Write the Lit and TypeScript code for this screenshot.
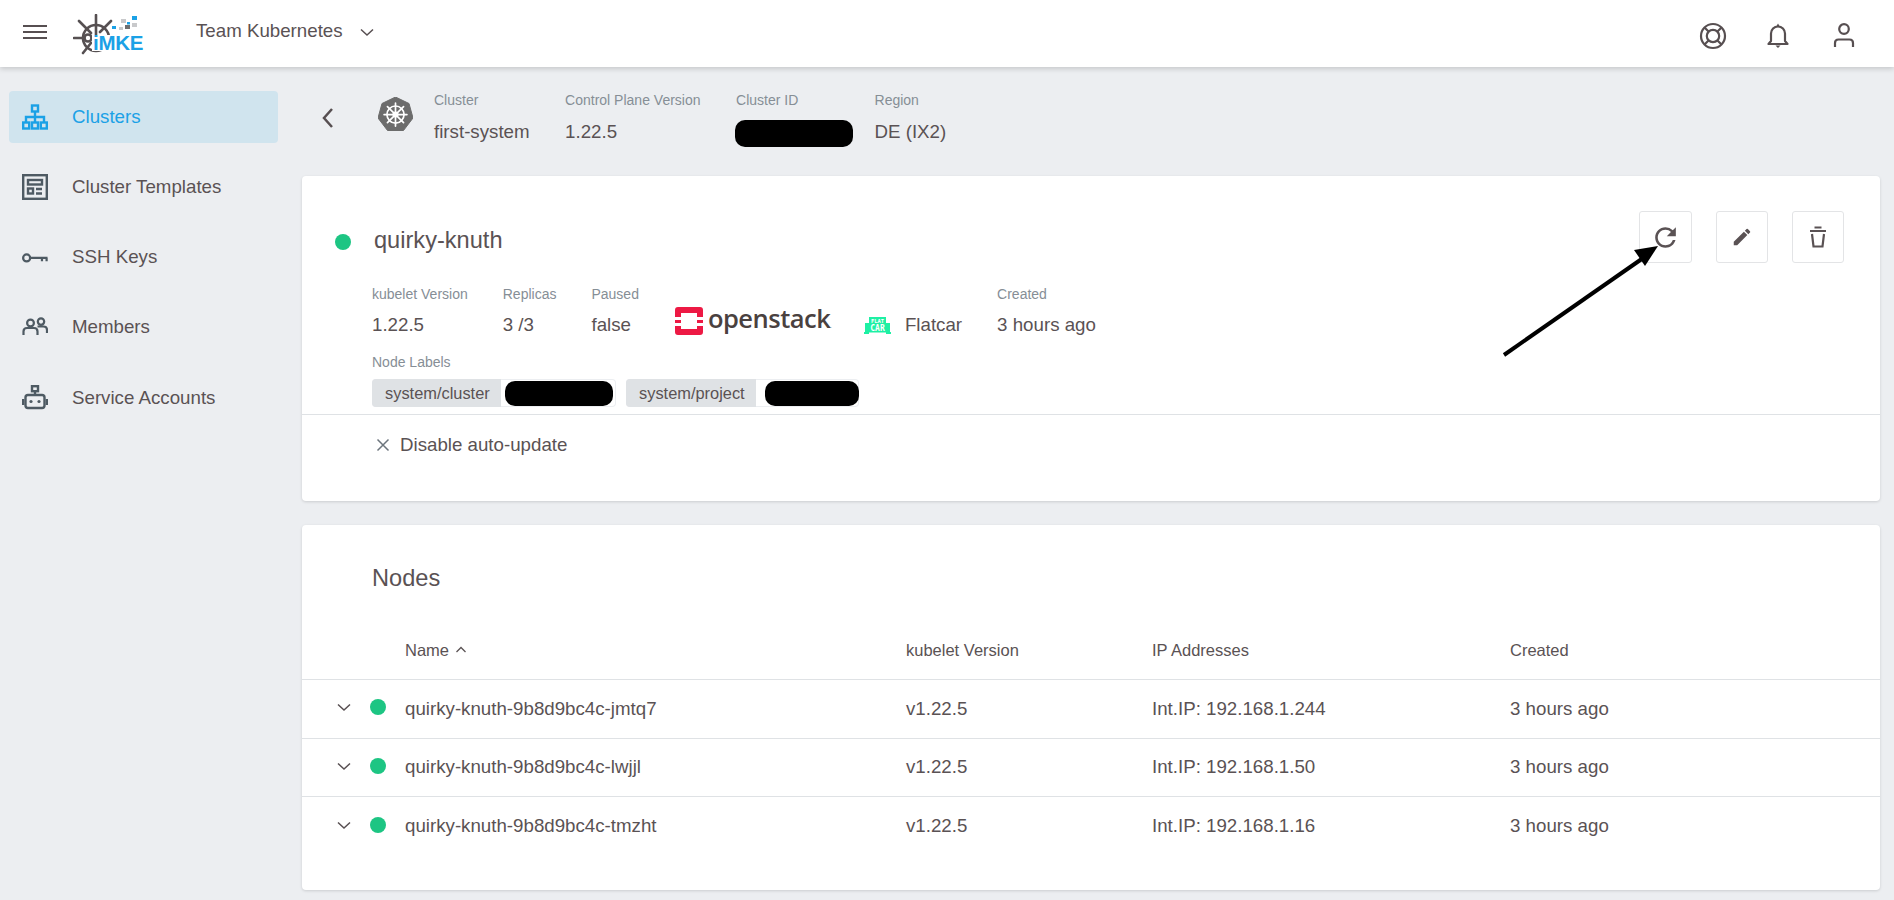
import { LitElement, html, css, svg } from "lit";
import { customElement } from "lit/decorators.js";

const ico = (w: number, h: number, vb: string, body: unknown, cls = "") =>
  html`<svg class=${cls} width=${w} height=${h} viewBox=${vb} aria-hidden="true">${body}</svg>`;

const chevronDown = (w = 16) => ico(w, w, "0 0 16 16", svg`<path d="M2 5.500 8 11l6-5.500" fill="none" stroke="currentColor" stroke-width="1.500"/>`);

const wheel = (stroke: string, sw: number) => svg`
  <g fill="none" stroke=${stroke} stroke-width=${sw} stroke-linecap="round">
    <circle cx="12" cy="12" r="6.600"/>
    <circle cx="12" cy="12" r="1.700"/>
    <path d="M12 3.200v17.600M3.200 12h17.600M5.800 5.800l12.400 12.400M18.200 5.800 5.800 18.200"/>
  </g>`;

const navIcons: Record<string, unknown> = {
  clusters: svg`<g fill="none" stroke="currentColor" stroke-width="2.400"><rect x="10" y="1.500" width="6" height="6"/><rect x="1.200" y="18.500" width="6" height="6"/><rect x="10" y="18.500" width="6" height="6"/><rect x="18.800" y="18.500" width="6" height="6"/><path d="M13 7.500v11M4 18.500V13h18v5.500"/></g>`,
  templates: svg`<g fill="none" stroke="currentColor" stroke-width="2.400"><rect x="1.200" y="1.200" width="23.600" height="23.600"/><rect x="6" y="6" width="14" height="4.500"/><rect x="6" y="14.500" width="5" height="5"/><path d="M14 15h6M14 19.500h6"/></g>`,
  keys: svg`<g fill="none" stroke="currentColor" stroke-width="2.400"><circle cx="5" cy="14" r="3.800"/><path d="M8.600 14H27.500M21.500 14v3.500M26.500 14v3.500"/></g>`,
  members: svg`<g fill="none" stroke="currentColor" stroke-width="2.200"><circle cx="8.500" cy="9" r="3.400"/><circle cx="19" cy="7.600" r="3.200"/><path d="M1.500 21v-3.500c0-2 1.500-3.500 3.500-3.500h7c2 0 3.500 1.500 3.500 3.500V21M15.500 12.500h6c2 0 3.500 1.500 3.500 3.500v3"/></g>`,
  accounts: svg`<g fill="none" stroke="currentColor" stroke-width="2.400"><rect x="10" y="1.200" width="6" height="5"/><path d="M13 6v4"/><rect x="3.500" y="10" width="19" height="13" rx="2.500"/><path d="M1.200 14v6M24.800 14v6"/></g><circle cx="9" cy="16.500" r="1.600" fill="currentColor"/><circle cx="17" cy="16.500" r="1.600" fill="currentColor"/>`,
};

@customElement("app-root")
export class AppRoot extends LitElement {
  static styles = css`
    :host { display: block; height: 900px; overflow: hidden; position: relative; background: #eceef1; font-family: "Liberation Sans", Arial, sans-serif; color: #5a5254; }
    svg { display: block; flex: none; }
    .top { height: 67px; background: #fff; box-shadow: 0 2px 5px rgba(0,0,0,.16); display: flex; align-items: center; position: relative; z-index: 1; }
    .burger { width: 24px; margin: 0 0 4px 23px; display: grid; gap: 4px; }
    .burger i { height: 2px; background: #574f51; display: block; }
    .logo { margin: 3px 0 0 26px; position: relative; width: 70px; height: 42px; }
    .logo-text { position: absolute; left: 20px; top: 20.5px; font-size: 20.5px; line-height: 16px; font-weight: 700; color: #1ba1e6; letter-spacing: -.3px; background: #fff; padding: 0 0 0 1px; margin-left: -1px; }
    .team { margin: 0 0 5px 53px; font-size: 18.72px; }
    .team-chev { margin: 0 0 3px 16px; color: #574f51; }
    .top-actions { margin-left: auto; display: flex; align-items: center; gap: 38px; padding: 5px 38px 0 0; color: #574f51; }
    .bell { margin-right: 3px; }
    .shell { display: grid; grid-template-columns: 302px 1fr; }
    .side { padding: 24px 24px 0 9px; display: grid; gap: 18.15px; align-content: start; }
    .nav { height: 52px; border-radius: 4px; display: flex; align-items: center; font-size: 18.72px; color: #5a5254; padding: 0 0 0 13px; gap: 24px; }
    .nav svg { color: #4e5a63; }
    .nav.active { background: #d0e4ee; color: #1ba1e6; }
    .nav.active svg { color: #1ba1e6; }
    .main { padding: 0 14px 0 0; }
    .crumb { height: 109px; display: flex; align-items: flex-start; padding-top: 25px; box-sizing: border-box; }
    .back { margin: 14px 42px 0 18px; color: #574f51; }
    .k8s { margin: 5px 21px 0 0; }
    .metas { display: flex; gap: 35px; }
    .crumb .metas { gap: 35.5px; }
    .meta .l { font-size: 14px; line-height: 16px; color: #868e96; white-space: nowrap; }
    .meta .v { font-size: 18.72px; line-height: 22px; margin-top: 13px; white-space: nowrap; }
    .meta.narrow { width: 103px; }
    .pill { background: #000; border-radius: 10px; display: block; }
    .pill.id { width: 118px; height: 27px; margin: 12px 0 0 -1px; }
    .card { background: #fff; border-radius: 4px; box-shadow: 0 1px 3px rgba(0,0,0,.14); }
    .c1 { height: 325px; }
    .c1-head { display: flex; align-items: flex-start; padding: 35px 36px 0 33px; }
    .dot { width: 16px; height: 16px; border-radius: 50%; background: #1dc583; flex: none; }
    .c1-head .dot { margin: 23px 23px 0 0; }
    .title { font-size: 23.6px; line-height: 28px; margin-top: 15px; }
    .btns { margin-left: auto; display: flex; gap: 24px; color: #5a5254; }
    .btn { width: 52px; height: 52px; border: 1px solid #e3e4e6; border-radius: 3px; box-sizing: border-box; display: flex; align-items: center; justify-content: center; }
    .btn.wide { width: 53px; }
    .c1-body { padding: 0 0 0 70px; margin-top: 23px; }
    .c1 .metas { align-items: flex-start; }
    .c1 .meta .v { margin-top: 12px; }
    .os { display: flex; align-items: center; gap: 5px; margin-top: 21px; width: 155px; height: 28px; padding-left: 1px; box-sizing: border-box; }
    .os-text { font-family: "Open Sans", sans-serif; font-size: 25.5px; line-height: 28px; font-weight: 600; color: #4a413f; letter-spacing: -.5px; margin-top: 1px; white-space: nowrap; }
    .os-text small { font-size: 5px; font-weight: 400; letter-spacing: 0; }
    .fc { display: flex; align-items: center; gap: 14px; margin-top: 28px; font-size: 18.72px; line-height: 22px; white-space: nowrap; }
    .nl { font-size: 14px; line-height: 16px; color: #868e96; margin-top: 18px; }
    .chips { display: flex; gap: 10px; margin-top: 9px; }
    .chip { display: flex; height: 28px; border-radius: 4px; box-shadow: 0 0 0 1px #eceef1 inset; overflow: hidden; }
    .chip b { font-weight: 400; background: #dfe2e5; font-size: 16.4px; line-height: 28px; padding: 0 0 0 13px; box-sizing: border-box; }
    .chip b.k1 { width: 129px; }
    .chip b.k2 { width: 130px; }
    .chip span { display: flex; align-items: center; box-sizing: border-box; }
    .chip span.v1 { width: 115px; padding-left: 4px; }
    .chip span.v2 { width: 103px; padding-left: 9px; }
    .chip .pill { height: 25px; border-radius: 10px; }
    .chip .p1 { width: 108px; }
    .chip .p2 { width: 94px; }
    .rule { height: 1px; background: #dfe2e5; margin-top: 7px; }
    .auto { display: flex; align-items: center; gap: 10px; padding: 19px 0 0 74px; font-size: 18.72px; line-height: 22px; }
    .auto svg { color: #6c757d; }
    .c2 { margin-top: 24px; height: 365px; }
    .c2 h2 { margin: 0; font-weight: 400; font-size: 23.6px; line-height: 28px; padding: 39px 0 0 70px; }
    .rowgrid { display: grid; grid-template-columns: 103px 501px 246px 358px 1fr; align-items: center; border-bottom: 1px solid #dfe2e5; }
    .rowgrid.head { height: 48px; margin-top: 34px; padding-bottom: 5px; font-size: 16.5px; box-sizing: content-box; }
    .rowgrid.head .name { display: flex; align-items: center; gap: 6px; }
    .rowgrid.row { height: 58.5px; font-size: 18.72px; box-sizing: border-box; }
    .rowgrid.row:last-child { border-bottom: 0; }
    .lead { display: flex; align-items: center; padding-left: 34px; gap: 18px; margin-top: -3px; color: #574f51; }
    .arrow { position: absolute; left: 1490px; top: 235px; pointer-events: none; }
  `;

  render() {
    const nav: [string, string, boolean?][] = [
      ["clusters", "Clusters", true],
      ["templates", "Cluster Templates"],
      ["keys", "SSH Keys"],
      ["members", "Members"],
      ["accounts", "Service Accounts"],
    ];
    const rows = [
      ["quirky-knuth-9b8d9bc4c-jmtq7", "Int.IP: 192.168.1.244"],
      ["quirky-knuth-9b8d9bc4c-lwjjl", "Int.IP: 192.168.1.50"],
      ["quirky-knuth-9b8d9bc4c-tmzht", "Int.IP: 192.168.1.16"],
    ];
    return html`
      <header class="top">
        <div class="burger"><i></i><i></i><i></i></div>
        <div class="logo">
          ${ico(70, 42, "0 0 70 42", svg`
            <g fill="none" stroke="#565052" stroke-width="2.600" stroke-linecap="round">
              <circle cx="23" cy="24" r="13"/>
              <circle cx="15" cy="24" r="3.500"/>
              <path d="M23 1v21M1 24h10M6 7l12 12M38 7 27 18M10 39l8-10"/>
            </g>
            <g fill="#1ba1e6"><rect x="59" y="2" width="5" height="4"/><rect x="54" y="8" width="3" height="2.500"/><rect x="39" y="12" width="4" height="3"/></g>
            <g fill="#c8c9cb"><rect x="48" y="5" width="5" height="4"/><rect x="59" y="9" width="5" height="4"/><rect x="46" y="13" width="4" height="3"/></g>
            <rect x="52" y="11" width="5" height="4" fill="#6e6e70"/>`)}
          <span class="logo-text">iMKE</span>
        </div>
        <span class="team">Team Kubernetes</span>
        <span class="team-chev">${chevronDown(16)}</span>
        <div class="top-actions">
          ${ico(28, 28, "0 0 28 28", svg`<g fill="none" stroke="currentColor" stroke-width="2.200"><circle cx="14" cy="14" r="12"/><circle cx="14" cy="14" r="6.200"/><path d="M5.500 5.500 9.800 9.800M22.500 5.500 18.200 9.800M5.500 22.500l4.300-4.300M22.500 22.500l-4.300-4.300"/></g>`)}
          ${ico(26, 28, "0 0 26 28", svg`<path d="M3.500 22h19l-2.500-3V11.500a7 7 0 0 0-14 0V19l-2.500 3Z" fill="none" stroke="currentColor" stroke-width="2.200" stroke-linejoin="round"/><path d="M10.500 23.500h5l-2.500 2.500ZM11.500 4l1.500-2.500 1.500 2.500Z" fill="currentColor"/>`, "bell")}
          ${ico(24, 28, "0 0 24 28", svg`<g fill="none" stroke="currentColor" stroke-width="2.200"><circle cx="12" cy="7" r="4.800"/><path d="M3 25v-4c0-2 1.500-3.500 3.500-3.500h11c2 0 3.500 1.500 3.500 3.500v4"/></g>`)}
        </div>
      </header>
      <div class="shell">
        <nav class="side">
          ${nav.map(([k, t, a]) => html`<div class="nav ${a ? "active" : ""}">${ico(26, 26, k === "keys" ? "0 0 28 26" : "0 0 26 26", navIcons[k])}<span>${t}</span></div>`)}
        </nav>
        <main class="main">
          <div class="crumb">
            <span class="back">${ico(16, 24, "0 0 16 24", svg`<path d="M12 3 4 12l8 9" fill="none" stroke="currentColor" stroke-width="2.500"/>`)}</span>
            <span class="k8s">${ico(35, 36, "0 0 35 36", svg`<path d="M17.500 0 31 6.500 35 21 25.500 33.500h-16L0 21 4 6.500Z" fill="#6c6c6c" stroke="#6c6c6c" stroke-linejoin="round"/><g transform="translate(1.900 2) scale(1.300)">${wheel("#fff", 1.300)}</g>`)}</span>
            <div class="metas">
              <div class="meta"><div class="l">Cluster</div><div class="v">first-system</div></div>
              <div class="meta"><div class="l">Control Plane Version</div><div class="v">1.22.5</div></div>
              <div class="meta narrow"><div class="l">Cluster ID</div><span class="pill id"></span></div>
              <div class="meta"><div class="l">Region</div><div class="v">DE (IX2)</div></div>
            </div>
          </div>
          <section class="card c1">
            <div class="c1-head">
              <span class="dot"></span>
              <div class="title">quirky-knuth</div>
              <div class="btns">
                <div class="btn wide">${ico(31, 31, "0 0 24 24", svg`<path fill="currentColor" d="M17.650 6.350A7.958 7.958 0 0 0 12 4c-4.420 0-7.990 3.580-7.990 8s3.570 8 7.990 8c3.730 0 6.840-2.550 7.730-6h-2.080A5.990 5.990 0 0 1 12 18c-3.310 0-6-2.690-6-6s2.690-6 6-6c1.660 0 3.140.690 4.220 1.780L13 11h7V4l-2.350 2.350z"/>`)}</div>
                <div class="btn">${ico(22, 22, "0 0 24 24", svg`<path fill="currentColor" d="M3 17.250V21h3.750L17.810 9.940l-3.750-3.750L3 17.250zM20.710 7.040a1 1 0 0 0 0-1.410l-2.340-2.340a1 1 0 0 0-1.410 0l-1.830 1.830 3.750 3.750 1.830-1.830z"/>`)}</div>
                <div class="btn">${ico(20, 22, "0 0 20 22", svg`<g fill="none" stroke="currentColor" stroke-width="2.200"><path d="M2 5h16M6.500 1.500h7M4 8l1.500 12.500h9L16 8"/></g>`)}</div>
              </div>
            </div>
            <div class="c1-body">
              <div class="metas">
                <div class="meta"><div class="l">kubelet Version</div><div class="v">1.22.5</div></div>
                <div class="meta"><div class="l">Replicas</div><div class="v">3 /3</div></div>
                <div class="meta"><div class="l">Paused</div><div class="v">false</div></div>
                <div class="os">
                  ${ico(28, 28, "0 0 28 28", svg`<path fill="#ed1944" d="M3 0h22a3 3 0 0 1 3 3v7h-6V6H6v4H0V3a3 3 0 0 1 3-3ZM0 13h6v3H0ZM22 13h6v3h-6ZM0 19h6v3h16v-3h6v6a3 3 0 0 1-3 3H3a3 3 0 0 1-3-3Z"/>`)}
                  <span class="os-text">openstack<small>.</small></span>
                </div>
                <div class="fc">
                  ${ico(27, 17, "0 0 27 17", svg`<rect x="5" y="0" width="17" height="7" fill="#1ef0a4"/><rect x="1" y="6" width="25" height="9.500" fill="#1ef0a4"/><rect x="0" y="15" width="5" height="2" fill="#1ef0a4"/><rect x="22" y="15" width="5" height="2" fill="#1ef0a4"/><text x="13.500" y="5.500" text-anchor="middle" font-family="DejaVu Sans Mono" font-size="5.500" font-weight="700" fill="#fff">FLAT</text><text x="13.500" y="14" text-anchor="middle" font-family="DejaVu Sans Mono" font-size="8" font-weight="700" fill="#fff">CAR</text>`)}
                  <span>Flatcar</span>
                </div>
                <div class="meta"><div class="l">Created</div><div class="v">3 hours ago</div></div>
              </div>
              <div class="nl">Node Labels</div>
              <div class="chips">
                <div class="chip"><b class="k1">system/cluster</b><span class="v1"><i class="pill p1"></i></span></div>
                <div class="chip"><b class="k2">system/project</b><span class="v2"><i class="pill p2"></i></span></div>
              </div>
            </div>
            <div class="rule"></div>
            <div class="auto">
              ${ico(14, 14, "0 0 14 14", svg`<path d="M1.500 1.500l11 11M12.500 1.500l-11 11" stroke="currentColor" stroke-width="1.500"/>`)}
              <span>Disable auto-update</span>
            </div>
          </section>
          <section class="card c2">
            <h2>Nodes</h2>
            <div class="rowgrid head">
              <span></span>
              <span class="name">Name ${ico(12, 12, "0 0 12 12", svg`<path d="M1.500 8 6 3.500 10.500 8" fill="none" stroke="currentColor" stroke-width="1.300"/>`)}</span>
              <span>kubelet Version</span><span>IP Addresses</span><span>Created</span>
            </div>
            ${rows.map(([n, ip]) => html`<div class="rowgrid row">
              <span class="lead">${chevronDown(16)}<span class="dot"></span></span>
              <span>${n}</span><span>v1.22.5</span><span>${ip}</span><span>3 hours ago</span>
            </div>`)}
          </section>
        </main>
      </div>
      <svg class="arrow" width="180" height="130" viewBox="0 0 180 130" aria-hidden="true">
        <path d="M14 120 156 21" stroke="#000" stroke-width="4" fill="none"/>
        <path d="M168 11 144 15 155 31Z" fill="#000"/>
      </svg>
    `;
  }
}
